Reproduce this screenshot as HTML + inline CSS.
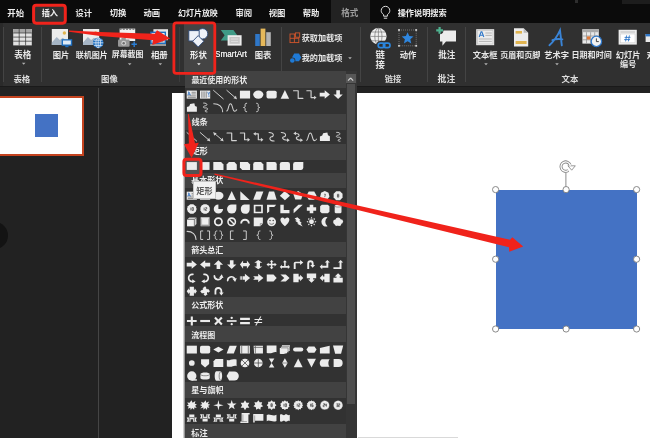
<!DOCTYPE html>
<html lang="zh-CN">
<head>
<meta charset="utf-8">
<title>PowerPoint - 插入形状</title>
<style>
html,body{margin:0;padding:0;background:#222;}
body{width:650px;height:438px;overflow:hidden;font-family:"Liberation Sans",sans-serif;}
#app{position:relative;width:650px;height:438px;overflow:hidden;background:#212121;}
#app div{position:absolute;box-sizing:border-box;}
.tabbar{left:0;top:0;width:650px;height:23px;background:#0b0b0b;}
.tab-ins{left:34px;top:5px;width:31px;height:18px;background:#303030;}
.tab-fmt{left:330.5px;top:0;width:39.5px;height:23px;background:#222;}
.ribbon{left:0;top:23px;width:650px;height:63px;background:#303030;}
.ribbon .edge{left:0;top:0;width:3px;height:63px;background:#2a2a2a;}
.sep{top:27px;width:1px;height:55px;background:#444;}
.shapebtn{left:183.5px;top:24px;width:30.5px;height:49px;background:#444;}
.smart{left:215.4px;top:49.4px;font-size:8.6px;line-height:10px;color:#efefef;filter:blur(.3px);letter-spacing:0;white-space:nowrap;transform-origin:0 50%;transform:scaleX(.945);text-shadow:0 0 .5px #efefef;}
.work{left:0;top:86px;width:650px;height:352px;background:#222;}
.ribline{left:0;top:86px;width:650px;height:1px;background:#1a1a1a;}
.split{left:97.5px;top:88px;width:1px;height:350px;background:#454545;}
.thumb{left:-2px;top:96.4px;width:85.6px;height:59.8px;background:#fff;border:2.2px solid #c4431f;}
.thumb .sq{left:34.8px;top:15.4px;width:23.4px;height:23px;background:#4472c4;}
.dot{left:-19px;top:222px;width:26.5px;height:26.5px;border-radius:50%;background:#131313;}
.slide{left:172px;top:92.8px;width:478px;height:345.2px;background:#fff;}
.slideline{left:358px;top:436.6px;width:100px;height:1.4px;background:#d9d9d9;}
.blue{left:495.6px;top:189.6px;width:141px;height:139.4px;background:#4472c4;}
.dd{left:184.7px;top:70.8px;width:172.8px;height:367.2px;background:#323232;overflow:hidden;}
.ddshadow{left:183.2px;top:93px;width:1.6px;height:345px;background:linear-gradient(90deg,#ededed,#777);}
.dd .hd{left:0;width:161.2px;background:#424242;}
.dd .sb{left:161.2px;top:0;width:11.6px;height:367.2px;background:#353535;}
.dd .sbthumb{left:162px;top:13.4px;width:8.6px;height:320px;background:#4e4e4e;}
.dd .sbbtn{left:161.6px;top:3.4px;width:9.6px;height:9px;background:#575757;}
.tip{left:193px;top:181.4px;width:22.6px;height:17.8px;background:#f2f2f2;border:.6px solid #c4c4c4;}
.rectsel{left:185.2px;top:160.4px;width:14.6px;height:14px;background:#525252;}
#ov,#ov2{position:absolute;left:0;top:0;filter:blur(.4px);}
#ov text,#ov2 text{font-family:"Liberation Sans","Noto Sans CJK SC",sans-serif;font-weight:bold;}
.t{position:absolute;color:transparent;line-height:1;height:1em;white-space:nowrap;overflow:hidden;letter-spacing:0;}
</style>
</head>
<body>
<div id="app">
 <div class="tabbar"><div class="tab-ins"></div><div class="tab-fmt"></div><div style="left:575px;top:0;width:3px;height:3px;background:#2e2e2e"></div><div style="left:622px;top:0;width:28px;height:4px;background:#1d1d1d"></div></div>
 <div class="ribbon"><div class="edge"></div></div>
 <div class="sep" style="left:3px"></div><div class="sep" style="left:41.3px"></div><div class="sep" style="left:281.4px"></div><div class="sep" style="left:178.6px;background:#3c3c3c"></div>
 <div class="sep" style="left:360.4px"></div><div class="sep" style="left:427.4px"></div><div class="sep" style="left:465.4px"></div>
 <div class="shapebtn"></div>
 <div class="smart">SmartArt</div>
 <div class="work"></div><div class="ribline"></div>
 <div class="split"></div>
 <div class="thumb"><div class="sq"></div></div>
 <div class="dot"></div>
 <div class="slide"></div><div class="slideline"></div>
 <div class="blue"></div>
 <div class="ddshadow"></div>
 <div class="dd"><div class="hd" style="top:0.0px;height:17.3px"></div><div class="hd" style="top:43.6px;height:15.5px"></div><div class="hd" style="top:72.8px;height:16.4px"></div><div class="hd" style="top:101.8px;height:15.3px"></div><div class="hd" style="top:170.9px;height:15.2px"></div><div class="hd" style="top:226.0px;height:16.8px"></div><div class="hd" style="top:255.7px;height:15.3px"></div><div class="hd" style="top:311.6px;height:15.4px"></div><div class="hd" style="top:353.6px;height:13.6px"></div><div class="sb"></div><div class="sbthumb"></div><div class="sbbtn"></div></div>
 <div class="rectsel"></div>
 <svg id="ov" width="650" height="438" viewBox="0 0 650 438">
  <!-- tab + ribbon text and icons -->
  <text x="7.3" y="15.74" font-size="8.39" fill="#eeeeee">开始</text><text x="41.7" y="15.65" font-size="8.13" fill="#eeeeee">插入</text><text x="75.5" y="15.69" font-size="8.23" fill="#eeeeee">设计</text><text x="109.7" y="15.72" font-size="8.33" fill="#eeeeee">切换</text><text x="143.5" y="15.72" font-size="8.33" fill="#eeeeee">动画</text><text x="178.0" y="15.59" font-size="7.97" fill="#eeeeee">幻灯片放映</text><text x="235.4" y="15.72" font-size="8.33" fill="#eeeeee">审阅</text><text x="268.7" y="15.72" font-size="8.33" fill="#eeeeee">视图</text><text x="302.7" y="15.72" font-size="8.33" fill="#eeeeee">帮助</text><text x="341.3" y="15.80" font-size="8.54" fill="#9e9e9e">格式</text><text x="397.7" y="15.67" font-size="8.19" fill="#eeeeee">操作说明搜索</text><g fill="none" stroke="#e0e0e0" stroke-width="1"><path d="M383.6 16.2v-1.6c-1.5-1-2.4-2.4-2.4-4a4.3 4.3 0 0 1 8.6 0c0 1.6-.9 3-2.4 4v1.6z"/><path d="M383.8 18.2h3.4"/></g><text x="14.2" y="57.72" font-size="8.59" fill="#e8e8e8">表格</text><text x="52.7" y="57.62" font-size="8.33" fill="#e8e8e8">图片</text><text x="75.7" y="57.51" font-size="8.04" fill="#e8e8e8">联机图片</text><text x="111.7" y="57.48" font-size="7.96" fill="#e8e8e8">屏幕截图</text><text x="150.9" y="57.64" font-size="8.39" fill="#e8e8e8">相册</text><text x="190.1" y="57.64" font-size="8.39" fill="#f2f2f2">形状</text><text x="254.7" y="57.62" font-size="8.33" fill="#e8e8e8">图表</text><text x="301.7" y="40.85" font-size="8.13" fill="#e8e8e8">获取加载项</text><text x="301.7" y="61.05" font-size="8.13" fill="#e8e8e8">我的加载项</text><text x="375.6" y="58.01" font-size="9.35" fill="#e8e8e8">链</text><text x="375.6" y="67.91" font-size="9.35" fill="#e8e8e8">接</text><text x="399.7" y="57.62" font-size="8.33" fill="#e8e8e8">动作</text><text x="438.2" y="57.72" font-size="8.59" fill="#e8e8e8">批注</text><text x="472.7" y="57.58" font-size="8.22" fill="#e8e8e8">文本框</text><text x="500.3" y="57.50" font-size="8.01" fill="#e8e8e8">页眉和页脚</text><text x="544.2" y="57.58" font-size="8.22" fill="#e8e8e8">艺术字</text><text x="571.5" y="57.52" font-size="8.05" fill="#e8e8e8">日期和时间</text><text x="615.7" y="57.58" font-size="8.22" fill="#e8e8e8">幻灯片</text><text x="620.1" y="67.45" font-size="8.13" fill="#e8e8e8">编号</text><text x="646.7" y="57.62" font-size="8.33" fill="#e8e8e8">对象</text><text x="13.4" y="81.98" font-size="8.49" fill="#dedede">表格</text><text x="101.1" y="81.94" font-size="8.39" fill="#dedede">图像</text><text x="384.7" y="81.92" font-size="8.33" fill="#dedede">链接</text><text x="437.6" y="82.12" font-size="8.85" fill="#dedede">批注</text><text x="561.5" y="81.96" font-size="8.44" fill="#dedede">文本</text><path d="M21.9 62.8h3.6l-1.8 2.0z" fill="#b0b0b0"/><path d="M127.9 63.3h3.6l-1.8 2.0z" fill="#b0b0b0"/><path d="M158.5 63.3h3.6l-1.8 2.0z" fill="#b0b0b0"/><path d="M484.2 63.2h3.6l-1.8 2.0z" fill="#b0b0b0"/><path d="M555.2 63.2h3.6l-1.8 2.0z" fill="#b0b0b0"/><path d="M348.2 57.2h3.6l-1.8 2.0z" fill="#b0b0b0"/><path d="M197.1 63.3h3.6l-1.8 2.0z" fill="#f0f0f0"/><g><rect x="13.2" y="29" width="18.6" height="16.4" fill="#e2e2e2"/><rect x="13.2" y="29" width="18.6" height="4" fill="#a5a5a5"/><path d="M19.2 29v16.4M25.6 29v16.4M13.2 33h18.6M13.2 37.1h18.6M13.2 41.2h18.6" stroke="#303030" stroke-width=".7" fill="none"/></g><g><rect x="51.8" y="29.0" width="16.2" height="16.0" fill="#ececec"/><path d="M51.8 42.5l4.9 -5.6l3.2 3.2l2.9 -2.4l5.2 4.8v2.5h-16.2z" fill="#a6b5c5"/><circle cx="64.4" cy="33.0" r="1.7" fill="#e0b450"/><rect x="61.6" y="39.2" width="10.6" height="6.6" fill="#1e6fc0"/><rect x="63" y="40.5" width="7.8" height="4" fill="#dfeaf6"/><rect x="65.3" y="45.8" width="3.2" height="1.4" fill="#1e6fc0"/></g><g><rect x="83.0" y="29.0" width="16.2" height="16.0" fill="#ececec"/><path d="M83.0 42.5l4.9 -5.6l3.2 3.2l2.9 -2.4l5.2 4.8v2.5h-16.2z" fill="#a6b5c5"/><circle cx="95.6" cy="33.0" r="1.7" fill="#e0b450"/><circle cx="98.2" cy="42.8" r="5.3" fill="#1e6fc0"/><g fill="none" stroke="#e8f0fa" stroke-width=".75"><ellipse cx="98.2" cy="42.8" rx="2.3" ry="5"/><path d="M93.1 42.8h10.2M98.2 37.7v10.2M93.9 40.2h8.6M93.9 45.4h8.6"/></g></g><g><rect x="119.600" y="28.600" width="15.600" height="12.400" fill="#f0f0f0"/><path d="M119.600 29.200h15.600" stroke="#666" stroke-width="1.200" stroke-dasharray="2 1.200"/><rect x="118" y="39.400" width="11.600" height="7.400" rx="1" fill="#979797"/><rect x="121.400" y="38" width="4.400" height="2" fill="#979797"/><circle cx="123.700" cy="43.200" r="2.400" fill="#cfcfcf"/><circle cx="123.700" cy="43.200" r="1.200" fill="#6e6e6e"/><path d="M134.200 41.600v5.400M131.500 44.300h5.400" stroke="#2b7fd6" stroke-width="1.400"/></g><g><rect x="153.4" y="29.2" width="14.6" height="11" fill="#e6e6e6"/><rect x="150.2" y="31.6" width="15.8" height="12.4" fill="#1e6fc0"/><rect x="151.6" y="33" width="13" height="9.6" fill="#e9eef4"/><path d="M151.6 42.6l3.6-5 2.8 2.8 2.2-2 4.4 4.2z" fill="#8fa3b8"/><circle cx="161.6" cy="35.4" r="1.2" fill="#e0b450"/><path d="M150.2 44h15.8v2h-15.8z" fill="#9a9a9a"/></g><g fill="#eef2f8" stroke="#2c4a78" stroke-width=".9" stroke-linejoin="round"><circle cx="202.600" cy="33.800" r="5.200"/><rect x="188.800" y="30.600" width="10.400" height="10.400"/><path d="M198.200 35.600l5.600 5.700-5.600 5.700-5.600-5.700z"/></g><g><path d="M220.800 30h12.600l3.800 5.300-3.800 5.300h-12.600l3.800-5.300z" fill="#3f9a86"/><rect x="227.600" y="35.200" width="14" height="10.400" fill="#ececec"/><rect x="229.400" y="37" width="10.400" height="6.800" fill="#c6c6c6"/><path d="M231 39h7.200M231 41.400h7.200" stroke="#e4e4e4" stroke-width=".8"/></g><g><rect x="255.2" y="34" width="4.6" height="12" fill="#2f77c8"/><rect x="260.6" y="28.6" width="4.8" height="17.4" fill="#e6b85a"/><rect x="266.2" y="32.2" width="4.6" height="13.8" fill="#b4b4b4"/></g><g fill="none" stroke="#d2562c" stroke-width=".9"><rect x="290" y="34" width="8.8" height="8.6"/><path d="M294.4 34v8.600M290 38.300h8.800"/><rect x="295.400" y="32.900" width="4.300" height="4.300" fill="#303030"/></g><g fill="#1f7ad6"><path d="M294.200 53.600h4.800l2.200 3.800-2.200 3.800h-4.800l-2.200-3.800z"/><circle cx="292.300" cy="60.500" r="3.100" fill="#303030"/><circle cx="292.300" cy="60.500" r="2.300"/></g><g><circle cx="378.4" cy="36.2" r="8.2" fill="#f0f0f0"/><g fill="none" stroke="#777" stroke-width=".7"><ellipse cx="378.4" cy="36.4" rx="3.6" ry="8.2"/><path d="M370 36.4h16.8M378.4 28v16.8M371.4 32h14M371.4 40.8h14"/></g><g fill="none" stroke="#303030" stroke-width="4.2"><rect x="378.2" y="43.2" width="6.6" height="4.4" rx="2.2"/><rect x="383.4" y="43.2" width="6.6" height="4.4" rx="2.2"/></g><g fill="none" stroke="#2b86de" stroke-width="1.7"><rect x="378.2" y="43.2" width="6.6" height="4.4" rx="2.2"/><rect x="383.4" y="43.2" width="6.6" height="4.4" rx="2.2"/></g></g><g><rect x="399" y="30" width="17.2" height="15.8" fill="none" stroke="#8f8f8f" stroke-width=".7" stroke-dasharray="1 1"/><rect x="398.1" y="29.1" width="1.8" height="1.8" fill="#d0d0d0"/><rect x="398.1" y="44.9" width="1.8" height="1.8" fill="#d0d0d0"/><rect x="415.3" y="29.1" width="1.8" height="1.8" fill="#d0d0d0"/><rect x="415.3" y="44.9" width="1.8" height="1.8" fill="#d0d0d0"/><path d="M407.6 32.2l1.7 3.9 4.2.4-3.2 2.8 1 4.1-3.7-2.2-3.7 2.2 1-4.1-3.2-2.8 4.2-.4z" fill="#2f86de"/></g><g><path d="M440 30.6h16v11h-10l-3.6 4.2v-4.2H440z" fill="#ececec"/><circle cx="439.6" cy="30.4" r="3.8" fill="#303030"/><path d="M439.6 27v6.8M436.2 30.4h6.8" stroke="#4fb290" stroke-width="2.2"/></g><g><rect x="476.2" y="29.2" width="18" height="16" fill="#ececec"/><rect x="477.4" y="30.4" width="15.6" height="13.6" fill="none" stroke="#bcbcbc" stroke-width=".6"/><path d="M485.4 33h6.4M485.4 35.4h6.4M478.8 39h13M478.8 41.4h13" stroke="#b5b5b5" stroke-width="1"/><path d="M479.2 37l1.9-5.2h.8l1.9 5.2M480 35.3h3" fill="none" stroke="#2f77c8" stroke-width="1.1"/></g><g><path d="M514 28.2h9.6l4.6 4.6v13.8H514z" fill="#ececec"/><path d="M523.6 28.2v4.6h4.6z" fill="#b9b9b9"/><rect x="515.6" y="31" width="6.4" height="2.6" fill="#e0b450"/><rect x="515.6" y="41" width="11" height="3" fill="#e0b450"/></g><path d="M549.400 45.200C553.600 41.600 557.600 35.600 560 30.400L561.800 45.400M552.400 40.200C555.400 39 559 38.800 562.400 39.400" fill="none" stroke="#3a84d6" stroke-width="1.900" stroke-linecap="round"/><g><rect x="582.4" y="29.2" width="16.4" height="14.4" fill="#e8e8e8"/><rect x="582.4" y="29.2" width="16.4" height="3" fill="#a8a8a8"/><path d="M586.5 32.2v11.4M590.6 32.2v11.4M594.7 32.2v11.4M582.4 36h16.4M582.4 39.8h16.4" stroke="#8d8d8d" stroke-width=".7"/><rect x="586.9" y="36.4" width="3.4" height="3.1" fill="#e07a3a"/><circle cx="596.4" cy="41.4" r="5.2" fill="#f1f1f1" stroke="#2f77c8" stroke-width="1.3"/><path d="M596.4 38.4v3.2h2.4" fill="none" stroke="#333" stroke-width=".9"/></g><g><rect x="618.6" y="29.8" width="18.2" height="14.8" fill="#ececec"/><path d="M620.4 32h14.6" stroke="#bdbdbd" stroke-width="1"/><rect x="620.4" y="34" width="14.6" height="8.8" fill="#fff" stroke="#c8c8c8" stroke-width=".5"/><path d="M626.6 35.4l-1 6M629.4 35.4l-1 6M624.6 37.4h5.8M624.2 39.6h5.8" stroke="#2f77c8" stroke-width=".9" fill="none"/></g><g><rect x="645.6" y="34" width="8" height="8" fill="#e9e9e9"/><rect x="645.6" y="34" width="8" height="2.4" fill="#2f77c8"/></g>
  <!-- dropdown -->
  <path d="M350.6 79.6l-2.6 2.6M350.6 79.6l2.6 2.6" transform="translate(0 -1.6)" stroke="#d0d0d0" stroke-width="1.1" fill="none"/>
  <text x="191.4" y="83.29" font-size="7.98" fill="#ececec">最近使用的形状</text><text x="191.4" y="125.29" font-size="8.23" fill="#ececec">线条</text><text x="191.4" y="153.59" font-size="8.23" fill="#ececec">矩形</text><text x="191.2" y="183.31" font-size="8.04" fill="#ececec">基本形状</text><text x="191.2" y="253.41" font-size="8.04" fill="#ececec">箭头总汇</text><text x="191.2" y="308.31" font-size="8.04" fill="#ececec">公式形状</text><text x="191.2" y="338.01" font-size="8.01" fill="#ececec">流程图</text><text x="191.2" y="393.25" font-size="8.14" fill="#ececec">星与旗帜</text><text x="191.2" y="435.69" font-size="8.23" fill="#ececec">标注</text>
  <g transform="translate(191.8 94.6) scale(1.06)"><path d="M-4.8 -3.8h9.6v7.6h-9.6z" fill="#ececec"/><path d="M-3.6 -2.4l1-0 1.3 3.2M-3.9 .8l1.3-3.2M-3.4 -.2h2" stroke="#2f6fc0" stroke-width=".7" fill="none"/><path d="M-.2 -2.2h4M-.2 -.6h4M-3.8 1.2h7.6M-3.8 2.6h7.6" stroke="#555" stroke-width=".6"/></g><g transform="translate(205.1 94.6) scale(1.06)"><path d="M-4.8 -3.8h9.6v7.6h-9.6z" fill="#ececec"/><path d="M-3 -3v6M-1 -3v6M1 -3v6" stroke="#555" stroke-width=".7"/><path d="M2.4 -2.6l1 2.6 1-2.6M2.6 1.4h1.8" stroke="#2f6fc0" stroke-width=".7" fill="none"/></g><g transform="translate(218.4 94.6) scale(1.06)"><path d="M-4.6 -4L4.6 4" fill="none" stroke="#d2d2d2" stroke-width="0.9" stroke-linecap="round" stroke-linejoin="round"/></g><g transform="translate(231.7 94.6) scale(1.06)"><path d="M-4.6 -4L4.4 3.8" fill="none" stroke="#d2d2d2" stroke-width="0.9" stroke-linecap="round" stroke-linejoin="round"/><path d="M4.8 4.2L1.6 3.4L4 1z" fill="#d2d2d2"/></g><g transform="translate(245.0 94.6) scale(1.06)"><path d="M-4.8 -3.7h9.6v7.4h-9.6z" fill="#ececec"/></g><g transform="translate(258.3 94.6) scale(1.06)"><ellipse rx="4.8" ry="3.8" fill="#ececec"/></g><g transform="translate(271.6 94.6) scale(1.06)"><rect x="-4.8" y="-3.7" width="9.6" height="7.4" rx="1.6" fill="#ececec"/></g><g transform="translate(284.9 94.6) scale(1.06)"><path d="M0 -4.400L4 4H-4z" fill="#ececec"/></g><g transform="translate(298.2 94.6) scale(1.06)"><path d="M-4.4 -3.6H0V3.6H4.4" fill="none" stroke="#d2d2d2" stroke-width="1.1" stroke-linecap="round" stroke-linejoin="round"/></g><g transform="translate(311.5 94.6) scale(1.06)"><path d="M-4.4 -3.6H-.4V2.8H3.2" fill="none" stroke="#d2d2d2" stroke-width="1.1" stroke-linecap="round" stroke-linejoin="round"/><path d="M4.8 2.8L2.4 1V4.6z" fill="#d2d2d2"/></g><g transform="translate(324.8 94.6) scale(1.06)"><path d="M-4.8 -1.7h4.7V-4L4.8 0L-.1 4V1.7h-4.7z" fill="#ececec"/></g><g transform="translate(338.1 94.6) scale(1.06)"><g transform="rotate(90)"><path d="M-4.2 -1.7h4.1V-4.4L4.2 0L-.1 4.4V1.7h-4.1z" fill="#ececec"/></g></g><g transform="translate(191.8 107.5) scale(1.06)"><path d="M-4.6 4V-.4L-2.4 -1.2L-1.6 -3.4L2.4 -4L3 -1.4L4.8 -.6V4z" fill="#ececec"/></g><g transform="translate(205.1 107.5) scale(1.06)"><path d="M-1.400 -4.200C2.400 -4.400 2.600 -2 .200 -1.600C-2.400 -1.200 -2.200 .600 .400 .400C3 .200 3 2.200 .800 2.600C-.600 2.900 -.400 4.200 1.800 4.200" fill="none" stroke="#d2d2d2" stroke-width="0.9" stroke-linecap="round" stroke-linejoin="round"/></g><g transform="translate(218.4 107.5) scale(1.06)"><path d="M-4.4 -3.6C.6 -3.6 4 -.4 4 4" fill="none" stroke="#d2d2d2" stroke-width="1.0" stroke-linecap="round" stroke-linejoin="round"/></g><g transform="translate(231.7 107.5) scale(1.06)"><path d="M-4.6 3.2C-3 3.2 -3.2 -3.600 -1.200 -3.600C1.200 -3.600 .400 3.600 2.800 3.600C3.800 3.600 4.300 3 4.700 2.200" fill="none" stroke="#d2d2d2" stroke-width="1.0" stroke-linecap="round" stroke-linejoin="round"/></g><g transform="translate(245.0 107.5) scale(1.06)"><path d="M1.6 -4C.2 -4 .1 -3.4 .1 -2.4V-1.2C.1 -.4 -.4 0 -1.4 0C-.4 0 .1 .4 .1 1.2V2.4C.1 3.4 .2 4 1.6 4" fill="none" stroke="#d2d2d2" stroke-width="0.9" stroke-linecap="round" stroke-linejoin="round"/></g><g transform="translate(258.3 107.5) scale(1.06)"><path d="M-1.6 -4C-.2 -4 -.1 -3.4 -.1 -2.4V-1.2C-.1 -.4 .4 0 1.4 0C.4 0 -.1 .4 -.1 1.2V2.4C-.1 3.4 -.2 4 -1.6 4" fill="none" stroke="#d2d2d2" stroke-width="0.9" stroke-linecap="round" stroke-linejoin="round"/></g><g transform="translate(191.8 136.8) scale(1.06)"><path d="M-4.6 -4L4.6 4" fill="none" stroke="#d2d2d2" stroke-width="0.9" stroke-linecap="round" stroke-linejoin="round"/></g><g transform="translate(205.1 136.8) scale(1.06)"><path d="M-4.6 -4L4.4 3.8" fill="none" stroke="#d2d2d2" stroke-width="0.9" stroke-linecap="round" stroke-linejoin="round"/><path d="M4.8 4.2L1.6 3.4L4 1z" fill="#d2d2d2"/></g><g transform="translate(218.4 136.8) scale(1.06)"><path d="M-4.2 -3.6L4.2 3.6" fill="none" stroke="#d2d2d2" stroke-width="0.9" stroke-linecap="round" stroke-linejoin="round"/><path d="M4.8 4.2L1.6 3.4L4 1z" fill="#d2d2d2"/><path d="M-4.8 -4.2L-1.6 -3.4L-4 -1z" fill="#d2d2d2"/></g><g transform="translate(231.7 136.8) scale(1.06)"><path d="M-4.4 -3.6H0V3.6H4.4" fill="none" stroke="#d2d2d2" stroke-width="1.1" stroke-linecap="round" stroke-linejoin="round"/></g><g transform="translate(245.0 136.8) scale(1.06)"><path d="M-4.4 -3.6H-.4V2.8H3.2" fill="none" stroke="#d2d2d2" stroke-width="1.1" stroke-linecap="round" stroke-linejoin="round"/><path d="M4.8 2.8L2.4 1V4.6z" fill="#d2d2d2"/></g><g transform="translate(258.3 136.8) scale(1.06)"><path d="M-3 -2.8H0V2.8H3.2" fill="none" stroke="#d2d2d2" stroke-width="1.1" stroke-linecap="round" stroke-linejoin="round"/><path d="M4.8 2.8L2.4 1V4.6z" fill="#d2d2d2"/><path d="M-4.8 -2.8L-2.4 -4.6V-1z" fill="#d2d2d2"/></g><g transform="translate(271.6 136.8) scale(1.06)"><path d="M-2.4 -4C3 -4 2 0 0 0C-2 0 -3 4 2.4 4" fill="none" stroke="#d2d2d2" stroke-width="1.0" stroke-linecap="round" stroke-linejoin="round"/></g><g transform="translate(284.9 136.8) scale(1.06)"><path d="M-3.4 -4C2 -4 1 0 -.8 0C-3 0 -3 3.2 2.6 3.2" fill="none" stroke="#d2d2d2" stroke-width="1.0" stroke-linecap="round" stroke-linejoin="round"/><path d="M4.6 3.2L2 1.4V5z" fill="#d2d2d2"/></g><g transform="translate(298.2 136.8) scale(1.06)"><path d="M-2.4 -3.2C2 -3.2 1 0 -.4 0C-2.6 0 -2.6 3.2 2.6 3.2" fill="none" stroke="#d2d2d2" stroke-width="1.0" stroke-linecap="round" stroke-linejoin="round"/><path d="M4.6 3.2L2 1.4V5z" fill="#d2d2d2"/><path d="M-4.6 -3.2L-2 -5V-1.4z" fill="#d2d2d2"/></g><g transform="translate(311.5 136.8) scale(1.06)"><path d="M-4.6 3.2C-3 3.2 -3.2 -3.600 -1.200 -3.600C1.200 -3.600 .400 3.600 2.800 3.600C3.800 3.600 4.300 3 4.700 2.200" fill="none" stroke="#d2d2d2" stroke-width="1.0" stroke-linecap="round" stroke-linejoin="round"/></g><g transform="translate(324.8 136.8) scale(1.06)"><path d="M-4.6 4V-.4L-2.4 -1.2L-1.6 -3.4L2.4 -4L3 -1.4L4.8 -.6V4z" fill="#ececec"/></g><g transform="translate(338.1 136.8) scale(1.06)"><path d="M-1.400 -4.200C2.400 -4.400 2.600 -2 .200 -1.600C-2.400 -1.200 -2.200 .600 .400 .400C3 .200 3 2.200 .800 2.600C-.600 2.900 -.400 4.200 1.800 4.200" fill="none" stroke="#d2d2d2" stroke-width="0.9" stroke-linecap="round" stroke-linejoin="round"/></g><g transform="translate(191.8 166.0) scale(1.06)"><path d="M-4.8 -3.7h9.6v7.4h-9.6z" fill="#ececec"/></g><g transform="translate(205.1 166.0) scale(1.06)"><path d="M-4.2 -3.7h8.4v7.4h-8.4z" fill="#ececec"/></g><g transform="translate(218.4 166.0) scale(1.06)"><path d="M-4.8 -3.7H2.6L4.8 -1.5V3.7H-4.8z" fill="#ececec"/></g><g transform="translate(231.7 166.0) scale(1.06)"><path d="M-2.6 -3.7H2.6L4.8 -1.5V3.7H-4.8V-1.5z" fill="#ececec"/></g><g transform="translate(245.0 166.0) scale(1.06)"><path d="M-4.8 -3.7H2.6L4.8 -1.5V3.7H-2.6L-4.8 1.5z" fill="#ececec"/></g><g transform="translate(258.3 166.0) scale(1.06)"><path d="M-2.8 -3.7H2.6L4.8 -1.5V3.7H-4.8V-1.7A2 2 0 0 1 -2.8 -3.7z" fill="#ececec"/></g><g transform="translate(271.6 166.0) scale(1.06)"><path d="M-4.8 -3.7H2.8A2 2 0 0 1 4.8 -1.7V3.7H-4.8z" fill="#ececec"/></g><g transform="translate(284.9 166.0) scale(1.06)"><path d="M-2.8 -3.7H2.8A2 2 0 0 1 4.8 -1.7V3.7H-4.8V-1.7A2 2 0 0 1 -2.8 -3.7z" fill="#ececec"/></g><g transform="translate(298.2 166.0) scale(1.06)"><path d="M-2.8 -3.7H4.8V1.7A2 2 0 0 1 2.8 3.7H-4.8V-1.7A2 2 0 0 1 -2.8 -3.7z" fill="#ececec"/></g><g transform="translate(191.8 195.7) scale(1.06)"><path d="M-4.8 -3.8h9.6v7.6h-9.6z" fill="#ececec"/><path d="M-3.6 -2.4l1-0 1.3 3.2M-3.9 .8l1.3-3.2M-3.4 -.2h2" stroke="#2f6fc0" stroke-width=".7" fill="none"/><path d="M-.2 -2.2h4M-.2 -.6h4M-3.8 1.2h7.6M-3.8 2.6h7.6" stroke="#555" stroke-width=".6"/></g><g transform="translate(205.1 195.7) scale(1.06)"><path d="M-4.8 -3.8h9.6v7.6h-9.6z" fill="#ececec"/><path d="M-3 -3v6M-1 -3v6M1 -3v6" stroke="#555" stroke-width=".7"/><path d="M2.4 -2.6l1 2.6 1-2.6M2.6 1.4h1.8" stroke="#2f6fc0" stroke-width=".7" fill="none"/></g><g transform="translate(218.4 195.7) scale(1.06)"><ellipse rx="4.8" ry="3.8" fill="#ececec"/></g><g transform="translate(231.7 195.7) scale(1.06)"><path d="M0 -4.400L4 4H-4z" fill="#ececec"/></g><g transform="translate(245.0 195.7) scale(1.06)"><path d="M-4.4 -4.2V4H4.4z" fill="#ececec"/></g><g transform="translate(258.3 195.7) scale(1.06)"><path d="M-1.8 -3.9H4.8L1.8 3.9H-4.8z" fill="#ececec"/></g><g transform="translate(271.6 195.7) scale(1.06)"><path d="M-2.4 -3.9H2.4L4.8 3.9H-4.8z" fill="#ececec"/></g><g transform="translate(284.9 195.7) scale(1.06)"><path d="M0 -4.4L4.8 0L0 4.4L-4.8 0z" fill="#ececec"/></g><g transform="translate(298.2 195.7) scale(1.06)"><path d="M0.0 -4.4L4.5 -1.4L2.8 3.5L-2.8 3.5L-4.5 -1.4z" fill="#ececec"/></g><g transform="translate(311.5 195.7) scale(1.06)"><path d="M-2.6 -3.9H2.6L4.8 0L2.6 3.9H-2.6L-4.8 0z" fill="#ececec"/></g><g transform="translate(324.8 195.7) scale(1.06)"><path d="M0.0 -4.5L3.5 -2.8L4.4 1.0L2.0 4.1L-2.0 4.1L-4.4 1.0L-3.5 -2.8z" fill="#ececec"/><g fill="none" stroke="#3a3a3a" stroke-width=".5" stroke-linejoin="round"><path transform="translate(-0.62 -1.35) scale(1.25 1.35)" d="M0 0H1L.4 2"/></g></g><g transform="translate(338.1 195.7) scale(1.06)"><path d="M4.2 1.8L1.8 4.2L-1.8 4.2L-4.2 1.8L-4.2 -1.8L-1.8 -4.2L1.8 -4.2L4.2 -1.8z" fill="#ececec"/><g fill="none" stroke="#3a3a3a" stroke-width=".5" stroke-linejoin="round"><path transform="translate(-0.62 -1.35) scale(1.25 1.35)" d="M0 0H1V2H0zM0 1H1"/></g></g><g transform="translate(191.8 209.0) scale(1.06)"><path d="M4.6 0.0L3.7 2.7L1.4 4.4L-1.4 4.4L-3.7 2.7L-4.6 0.0L-3.7 -2.7L-1.4 -4.4L1.4 -4.4L3.7 -2.7z" fill="#ececec"/><g fill="none" stroke="#3a3a3a" stroke-width=".5" stroke-linejoin="round"><path transform="translate(-1.52 -1.35) scale(1.25 1.35)" d="M.5 0V2"/><path transform="translate(0.28 -1.35) scale(1.25 1.35)" d="M0 0H1V2H0z"/></g></g><g transform="translate(205.1 209.0) scale(1.06)"><path d="M4.4 1.2L3.3 3.3L1.2 4.4L-1.2 4.4L-3.3 3.3L-4.4 1.2L-4.4 -1.2L-3.3 -3.3L-1.2 -4.4L1.2 -4.4L3.3 -3.3L4.4 -1.2z" fill="#ececec"/><g fill="none" stroke="#3a3a3a" stroke-width=".5" stroke-linejoin="round"><path transform="translate(-1.52 -1.35) scale(1.25 1.35)" d="M.5 0V2"/><path transform="translate(0.28 -1.35) scale(1.25 1.35)" d="M0 0H1V1H0V2H1"/></g></g><g transform="translate(218.4 209.0) scale(1.06)"><path d="M0 0V-4.2A4.4 4.2 0 1 0 4.4 0z" fill="#ececec"/></g><g transform="translate(231.7 209.0) scale(1.06)"><path d="M0 -4.2H4.4V0A4.4 4.2 0 1 1 0 -4.2z" fill="#ececec"/></g><g transform="translate(245.0 209.0) scale(1.06)"><path d="M4.4 -4.2V.6A4.2 4.4 0 1 1 -.6 -4.2z" fill="#ececec"/></g><g transform="translate(258.3 209.0) scale(1.06)"><path fill-rule="evenodd" d="M-4.3 -4.1h8.6v8.2h-8.6zM-2.7 -2.5v5h5.4v-5z" fill="#ececec"/></g><g transform="translate(271.6 209.0) scale(1.06)"><path d="M-4.3 -4.1h8.6L2.5 -2H-2.2V2.4L-4.3 4.1z" fill="#ececec"/></g><g transform="translate(284.9 209.0) scale(1.06)"><path d="M-4.3 -4.1h3.2V1h5.4V4.1h-8.6z" fill="#ececec"/></g><g transform="translate(298.2 209.0) scale(1.06)"><path d="M-4.3 4.1V.2L.2 -4.1H4.3z" fill="#ececec"/></g><g transform="translate(311.5 209.0) scale(1.06)"><path d="M-1.7 -4.1h3.4v2.4h2.7v3.4h-2.7v2.4h-3.4v-2.4h-2.7v-3.4h2.7z" fill="#ececec"/></g><g transform="translate(324.8 209.0) scale(1.06)"><path d="M-2.8 -4.1h5.6l1.6 1.6v5l-1.6 1.6h-5.6l-1.6-1.6v-5z" fill="#ececec"/></g><g transform="translate(338.1 209.0) scale(1.06)"><path d="M-3.2 -3c0-1.5 6.4-1.5 6.4 0v6c0 1.5-6.4 1.5-6.4 0z" fill="#ececec"/><path d="M-3.2 -2.8c0 1.3 6.4 1.3 6.4 0" fill="none" stroke="#555" stroke-width=".5"/></g><g transform="translate(191.8 221.8) scale(1.06)"><path d="M-4.4 -2.2l2-1.9h6.8v6.2l-2 2h-6.8z" fill="#cfcfcf"/><rect x="-4.4" y="-2.2" width="6.8" height="6.3" fill="#f0f0f0"/><path d="M-4.4 -2.2h6.8v6.3M2.4 -2.2l2-1.9" fill="none" stroke="#3a3a3a" stroke-width=".55"/></g><g transform="translate(205.1 221.8) scale(1.06)"><rect x="-4.3" y="-4.1" width="8.6" height="8.2" fill="#bdbdbd"/><path d="M-4.3 -4.1h8.6l-1.5 1.5h-5.6z" fill="#e9e9e9"/><path d="M-4.3 4.1h8.6l-1.5-1.5h-5.6z" fill="#9a9a9a"/><rect x="-2.8" y="-2.6" width="5.6" height="5.2" fill="#f0f0f0"/></g><g transform="translate(218.4 221.8) scale(1.06)"><circle r="3.4" fill="none" stroke="#ececec" stroke-width="1.7"/></g><g transform="translate(231.7 221.8) scale(1.06)"><circle r="3.5" fill="none" stroke="#ececec" stroke-width="1.5"/><path d="M-2.4 -2.4L2.4 2.4" stroke="#ececec" stroke-width="1.4"/></g><g transform="translate(245.0 221.8) scale(1.06)"><path d="M-3.6 1.6A3.6 3.6 0 0 1 3.6 1.6" fill="none" stroke="#ececec" stroke-width="1.8"/></g><g transform="translate(258.3 221.8) scale(1.06)"><path d="M-4.3 -4.1h8.6V1.7L1.9 4.1H-4.3z" fill="#ececec"/><path d="M4.3 1.7H1.9V4.1" fill="none" stroke="#555" stroke-width=".5"/></g><g transform="translate(271.6 221.8) scale(1.06)"><circle r="4.2" fill="#ececec"/><circle cx="-1.5" cy="-1.2" r=".65" fill="#333"/><circle cx="1.5" cy="-1.2" r=".65" fill="#333"/><path d="M-2.2 1.1C-1 2.7 1 2.7 2.2 1.1" fill="none" stroke="#333" stroke-width=".6"/></g><g transform="translate(284.9 221.8) scale(1.06)"><path d="M0 4.2C-5.4 .2 -5 -4 -2.3 -4C-.9 -4 0 -2.9 0 -2.2C0 -2.9 .9 -4 2.3 -4C5 -4 5.4 .2 0 4.2z" fill="#ececec"/></g><g transform="translate(298.2 221.8) scale(1.06)"><path d="M-.8 -4.2L2.2 -1.6L1 -1.1L3.4 1.2L2.3 1.6L4.2 4.4L-1 1.9L.3 1.3L-2.9 -.9L-1.4 -1.5L-3.4 -3.2z" fill="#ececec"/></g><g transform="translate(311.5 221.8) scale(1.06)"><g fill="#ececec"><circle r="2.3"/><path transform="rotate(0)" d="M-.9 -3.1L0 -4.7L.9 -3.1z"/><path transform="rotate(45)" d="M-.9 -3.1L0 -4.7L.9 -3.1z"/><path transform="rotate(90)" d="M-.9 -3.1L0 -4.7L.9 -3.1z"/><path transform="rotate(135)" d="M-.9 -3.1L0 -4.7L.9 -3.1z"/><path transform="rotate(180)" d="M-.9 -3.1L0 -4.7L.9 -3.1z"/><path transform="rotate(225)" d="M-.9 -3.1L0 -4.7L.9 -3.1z"/><path transform="rotate(270)" d="M-.9 -3.1L0 -4.7L.9 -3.1z"/><path transform="rotate(315)" d="M-.9 -3.1L0 -4.7L.9 -3.1z"/></g></g><g transform="translate(324.8 221.8) scale(1.06)"><path d="M2.6 -4.3A4.5 4.5 0 1 0 2.6 4.3A5.4 5.4 0 0 1 2.6 -4.3z" fill="#ececec"/></g><g transform="translate(338.1 221.8) scale(1.06)"><g fill="#ececec"><circle cx="-2.4" cy=".2" r="2.3"/><circle cx="0" cy="-1.6" r="2.4"/><circle cx="2.4" cy="-.2" r="2.3"/><circle cx="1" cy="1.8" r="2.1"/><circle cx="-1.4" cy="1.9" r="2"/></g></g><g transform="translate(191.8 235.2) scale(1.06)"><path d="M-4.4 -3.6C.6 -3.6 4 -.4 4 4" fill="none" stroke="#d2d2d2" stroke-width="1.0" stroke-linecap="round" stroke-linejoin="round"/></g><g transform="translate(205.1 235.2) scale(1.06)"><path d="M-2.2 -4H-4.2V4H-2.2M2.2 -4H4.2V4H2.2" fill="none" stroke="#d2d2d2" stroke-width="0.9" stroke-linecap="round" stroke-linejoin="round"/></g><g transform="translate(218.4 235.2) scale(1.06)"><path d="M-1.4 -4C-2.8 -4 -2.9 -3.4 -2.9 -2.4V-1.2C-2.9 -.4 -3.4 0 -4.4 0C-3.4 0 -2.9 .4 -2.9 1.2V2.4C-2.9 3.4 -2.8 4 -1.4 4M1.4 -4C2.8 -4 2.9 -3.4 2.9 -2.4V-1.2C2.9 -.4 3.4 0 4.4 0C3.4 0 2.9 .4 2.9 1.2V2.4C2.9 3.4 2.8 4 1.4 4" fill="none" stroke="#d2d2d2" stroke-width="0.9" stroke-linecap="round" stroke-linejoin="round"/></g><g transform="translate(231.7 235.2) scale(1.06)"><path d="M1.4 -4H-1.2V4H1.4" fill="none" stroke="#d2d2d2" stroke-width="0.9" stroke-linecap="round" stroke-linejoin="round"/></g><g transform="translate(245.0 235.2) scale(1.06)"><path d="M-1.4 -4H1.2V4H-1.4" fill="none" stroke="#d2d2d2" stroke-width="0.9" stroke-linecap="round" stroke-linejoin="round"/></g><g transform="translate(258.3 235.2) scale(1.06)"><path d="M1.6 -4C.2 -4 .1 -3.4 .1 -2.4V-1.2C.1 -.4 -.4 0 -1.4 0C-.4 0 .1 .4 .1 1.2V2.4C.1 3.4 .2 4 1.6 4" fill="none" stroke="#d2d2d2" stroke-width="0.9" stroke-linecap="round" stroke-linejoin="round"/></g><g transform="translate(271.6 235.2) scale(1.06)"><path d="M-1.6 -4C-.2 -4 -.1 -3.4 -.1 -2.4V-1.2C-.1 -.4 .4 0 1.4 0C.4 0 -.1 .4 -.1 1.2V2.4C-.1 3.4 -.2 4 -1.6 4" fill="none" stroke="#d2d2d2" stroke-width="0.9" stroke-linecap="round" stroke-linejoin="round"/></g><g transform="translate(191.8 264.6) scale(1.06)"><path d="M-4.8 -1.7h4.7V-4L4.8 0L-.1 4V1.7h-4.7z" fill="#ececec"/></g><g transform="translate(205.1 264.6) scale(1.06)"><g transform="scale(-1 1)"><path d="M-4.8 -1.7h4.7V-4L4.8 0L-.1 4V1.7h-4.7z" fill="#ececec"/></g></g><g transform="translate(218.4 264.6) scale(1.06)"><g transform="rotate(-90)"><path d="M-4.2 -1.7h4.1V-4.4L4.2 0L-.1 4.4V1.7h-4.1z" fill="#ececec"/></g></g><g transform="translate(231.7 264.6) scale(1.06)"><g transform="rotate(90)"><path d="M-4.2 -1.7h4.1V-4.4L4.2 0L-.1 4.4V1.7h-4.1z" fill="#ececec"/></g></g><g transform="translate(245.0 264.6) scale(1.06)"><path d="M-4.8 0L-1.8 -3.8v2.2h3.6v-2.2L4.8 0L1.8 3.8v-2.2h-3.6v2.2z" fill="#ececec"/></g><g transform="translate(258.3 264.6) scale(1.06)"><g transform="rotate(90)"><path d="M-4.4 0L-1.8 -3.8v2.2h3.6v-2.2L4.4 0L1.8 3.8v-2.2h-3.6v2.2z" fill="#ececec"/></g></g><g transform="translate(271.6 264.6) scale(1.06)"><path d="M0 -4.4L1.8 -2.6H.7V-.7H2.8V-1.8L4.8 0L2.8 1.8V.7H.7V2.6H1.8L0 4.4L-1.8 2.6H-.7V.7H-2.8V1.8L-4.8 0L-2.8 -1.8V-.7H-.7V-2.6H-1.8z" fill="#ececec"/></g><g transform="translate(284.9 264.6) scale(1.06)"><path d="M0 -4.2L1.9 -2.2H.7V1.3H2.8V.2L4.8 2.2L2.8 4.2V3H-2.8V4.2L-4.8 2.2L-2.8 .2V1.3H-.7V-2.2H-1.9z" fill="#ececec"/></g><g transform="translate(298.2 264.6) scale(1.06)"><path d="M-4.2 4.2V-1.2A1.6 1.6 0 0 1 -2.6 -2.8H1.8V-4.4L4.8 -2L1.8 .4V-1.2H-2.4V4.2z" fill="#ececec"/></g><g transform="translate(311.5 264.6) scale(1.06)"><path d="M-4 4.2V-1A3 3 0 0 1 2 -1V.4H3.4L1.1 3L-1.2 .4H.2V-1A1.2 1.2 0 0 0 -2.2 -1V4.2z" fill="#ececec"/></g><g transform="translate(324.8 264.6) scale(1.06)"><path d="M-4.8 2L-2.4 -.4V1.1H1.5V-2H0L2.4 -4.4L4.8 -2H3.3V2.9H-2.4V4.4z" fill="#ececec"/></g><g transform="translate(338.1 264.6) scale(1.06)"><path d="M-4.4 2.4H1.4V-2H0L2.4 -4.4L4.8 -2H3.2V4.2H-4.4z" fill="#ececec"/></g><g transform="translate(191.8 278.0) scale(1.06)"><path d="M1 -3.4A3.2 3.4 0 1 0 1 3.2" fill="none" stroke="#ececec" stroke-width="1.6" stroke-linecap="round" stroke-linejoin="round"/><path d="M.4 1.2L3.6 3.4L.4 5z" fill="#ececec"/></g><g transform="translate(205.1 278.0) scale(1.06)"><path d="M-1 -3.4A3.2 3.4 0 1 1 -1 3.2" fill="none" stroke="#ececec" stroke-width="1.6" stroke-linecap="round" stroke-linejoin="round"/><path d="M-.4 1.2L-3.6 3.4L-.4 5z" fill="#ececec"/></g><g transform="translate(218.4 278.0) scale(1.06)"><path d="M-3.8 -2A3.6 3.6 0 0 0 2.6 .2" fill="none" stroke="#ececec" stroke-width="1.6" stroke-linecap="round" stroke-linejoin="round"/><path d="M.6 -.2L3.2 -3.6L4.8 0z" fill="#ececec"/></g><g transform="translate(231.7 278.0) scale(1.06)"><path d="M-3.8 2.4A3.6 3.6 0 0 1 2.6 .2" fill="none" stroke="#ececec" stroke-width="1.6" stroke-linecap="round" stroke-linejoin="round"/><path d="M.6 .4L3.2 3.8L4.8 .2z" fill="#ececec"/></g><g transform="translate(245.0 278.0) scale(1.06)"><path d="M-2.2 -1.7h2.1V-4L4.8 0L-.1 4V1.7h-2.1zM-4.8 -1.7h.7v3.4h-.7zM-3.6 -1.7h.9v3.4h-.9z" fill="#ececec"/></g><g transform="translate(258.3 278.0) scale(1.06)"><path d="M-4.8 -1.7h4.7V-4L4.8 0L-.1 4V1.7h-4.7L-3.2 0z" fill="#ececec"/></g><g transform="translate(271.6 278.0) scale(1.06)"><path d="M-4.6 -3.2H1.8L4.8 0L1.8 3.2H-4.6z" fill="#ececec"/></g><g transform="translate(284.9 278.0) scale(1.06)"><path d="M-4.2 -3.4H.8L4.4 0L.8 3.4H-4.2L-.6 0z" fill="#ececec"/></g><g transform="translate(298.2 278.0) scale(1.06)"><path d="M-4.6 -4h5v2.6h1.4V-3L4.8 0L1.8 3V1.4H.4V4h-5z" fill="#ececec"/></g><g transform="translate(311.5 278.0) scale(1.06)"><path d="M-4.4 -4.2h8.8v4.4H1.5v1.2H3.2L0 4.4L-3.2 1.4h1.7V.2h-2.9z" fill="#ececec"/></g><g transform="translate(324.8 278.0) scale(1.06)"><path d="M4.6 -4h-5v2.6h-1.4V-3L-4.8 0L-1.8 3V1.4H-.4V4h5z" fill="#ececec"/></g><g transform="translate(338.1 278.0) scale(1.06)"><path d="M-4.4 4.2h8.8V-.2H1.5v-1.2H3.2L0 -4.4L-3.2 -1.4h1.7V-.2h-2.9z" fill="#ececec"/></g><g transform="translate(191.8 291.2) scale(1.06)"><path d="M-2 -4.2h4v2.8h.8V-2.8L4.8 0L2.8 2.8V1.4H2v2.8h-4V1.4h-.8V2.8L-4.8 0L-2.8 -2.8v1.4h.8z" fill="#ececec"/></g><g transform="translate(205.1 291.2) scale(1.06)"><path d="M-1.8 -1.8V-2.6h-.8L0 -4.6L1.6 -2.6h-.8v.8h1.8V-2.6L4.6 0L2.6 1.6V.8H1.8V2.6h.8L0 4.6L-1.6 2.6h.8V1.8H-2.6v.8L-4.6 0L-2.6 -1.6v.8z" fill="#ececec"/><path d="M-1.9 -1.9h3.8v3.8h-3.8z" fill="#ececec"/></g><g transform="translate(218.4 291.2) scale(1.06)"><path d="M-2.8 3.2V-.2A2.8 2.8 0 0 1 2.8 -.2V1.6" fill="none" stroke="#ececec" stroke-width="1.7" stroke-linecap="butt" stroke-linejoin="round"/><path d="M.6 1.2H5L2.8 4z" fill="#ececec"/></g><g transform="translate(191.8 321.0) scale(1.06)"><path d="M-1 -4.2h2v3.2h3.6v2h-3.6v3.2h-2v-3.2h-3.6v-2h3.6z" fill="#ececec"/></g><g transform="translate(205.1 321.0) scale(1.06)"><path d="M-4.6 -1h9.2v2h-9.2z" fill="#ececec"/></g><g transform="translate(218.4 321.0) scale(1.06)"><g transform="rotate(45)"><path d="M-1 -4.6h2v3.6h3.6v2h-3.6v3.6h-2v-3.6h-3.6v-2h3.6z" fill="#ececec"/></g></g><g transform="translate(231.7 321.0) scale(1.06)"><path d="M-4.6 -.8h9.2v1.6h-9.2z" fill="#ececec"/><circle cy="-3" r="1.1" fill="#ececec"/><circle cy="3" r="1.1" fill="#ececec"/></g><g transform="translate(245.0 321.0) scale(1.06)"><path d="M-4.6 -3h9.2v2h-9.2zM-4.6 1h9.2v2h-9.2z" fill="#ececec"/></g><g transform="translate(258.3 321.0) scale(1.06)"><path d="M-3.600 -2h7.200v1.100h-7.200zM-3.600 .900h7.200v1.100h-7.200z" fill="#ececec"/><path d="M2.4 -4.2L-2.4 4.2" stroke="#ececec" stroke-width="1"/></g><g transform="translate(191.8 349.6) scale(1.06)"><path d="M-4.8 -3.7h9.6v7.4h-9.6z" fill="#ececec"/></g><g transform="translate(205.1 349.6) scale(1.06)"><rect x="-4.8" y="-3.7" width="9.6" height="7.4" rx="1.6" fill="#ececec"/></g><g transform="translate(218.4 349.6) scale(1.06)"><path d="M0 -2.8L4.8 0L0 2.8L-4.8 0z" fill="#ececec"/></g><g transform="translate(231.7 349.6) scale(1.06)"><path d="M-2 -3.7H4.8L2 3.7H-4.8z" fill="#ececec"/></g><g transform="translate(245.0 349.6) scale(1.06)"><path d="M-4.6 -3.7h9.2v7.4h-9.2z" fill="#ececec"/><path d="M-3.1 -3.7v7.4M3.1 -3.7v7.4" stroke="#555" stroke-width=".7"/></g><g transform="translate(258.3 349.6) scale(1.06)"><path d="M-4.4 -3.7h8.8v7.4h-8.4z" fill="#ececec"/><path d="M-2.8 -3.7v7.4M-4.4 -2.1h8.8" stroke="#555" stroke-width=".7"/></g><g transform="translate(271.6 349.6) scale(1.06)"><path d="M-4.6 -3.8h9.2V2.4C2 1.4 0 4.6 -4.6 3.2z" fill="#ececec"/></g><g transform="translate(284.9 349.6) scale(1.06)"><path d="M-2.8 -4h7.6v5.4h-1.4v1h-1.4v1.2C1 2.6 -1 5 -4.8 3.8V-1.6h1v-1.2h1z" fill="#ececec"/><path d="M-3.8 -1.6h6.8v4M-2.8 -2.8h7.2v4" fill="none" stroke="#555" stroke-width=".5"/></g><g transform="translate(298.2 349.6) scale(1.06)"><rect x="-4.8" y="-1.9" width="9.6" height="3.8" rx="1.9" fill="#ececec"/></g><g transform="translate(311.5 349.6) scale(1.06)"><path d="M-2.8 -2.9H2.8L4.8 0L2.8 2.9H-2.8L-4.8 0z" fill="#ececec"/></g><g transform="translate(324.8 349.6) scale(1.06)"><path d="M-4.6 -1.4L4.6 -3.6V3.6H-4.6z" fill="#ececec"/></g><g transform="translate(338.1 349.6) scale(1.06)"><path d="M-4.8 -3.8H4.8L2.8 3.8H-2.8z" fill="#ececec"/></g><g transform="translate(191.8 363.0) scale(1.06)"><circle r="2.7" fill="#ececec"/></g><g transform="translate(205.1 363.0) scale(1.06)"><path d="M-3.8 -3.6h7.6V1L0 4.2L-3.8 1z" fill="#ececec"/></g><g transform="translate(218.4 363.0) scale(1.06)"><path d="M-2.6 -3.7H4.6V3.7H-4.6V-1.7z" fill="#ececec"/></g><g transform="translate(231.7 363.0) scale(1.06)"><path d="M-4.6 -3C-2 -1.4 -1 -4.6 4.6 -3.2V3C2 1.4 1 4.6 -4.6 3.2z" fill="#ececec"/></g><g transform="translate(245.0 363.0) scale(1.06)"><circle r="4.1" fill="#ececec"/><path d="M-2.9 -2.9L2.9 2.9M2.9 -2.9L-2.9 2.9" stroke="#444" stroke-width=".7"/></g><g transform="translate(258.3 363.0) scale(1.06)"><circle r="4.1" fill="#ececec"/><path d="M0 -4.1V4.1M-4.1 0H4.1" stroke="#444" stroke-width=".7"/></g><g transform="translate(271.6 363.0) scale(1.06)"><path d="M-2.6 -4.2H2.6L0 0L2.6 4.2H-2.6L0 0z" fill="#ececec"/></g><g transform="translate(284.9 363.0) scale(1.06)"><path d="M0 -4.4L2.6 0L0 4.4L-2.6 0z" fill="#ececec"/><path d="M-2.6 0h5.2" stroke="#555" stroke-width=".6"/></g><g transform="translate(298.2 363.0) scale(1.06)"><path d="M0 -4.2L4.2 4H-4.2z" fill="#ececec"/></g><g transform="translate(311.5 363.0) scale(1.06)"><path d="M0 4.2L4.2 -4H-4.2z" fill="#ececec"/></g><g transform="translate(324.8 363.0) scale(1.06)"><path d="M-2.8 -3.6H4.6C3 -2 3 2 4.6 3.6H-2.8C-5.4 2 -5.4 -2 -2.8 -3.6z" fill="#ececec"/></g><g transform="translate(338.1 363.0) scale(1.06)"><path d="M-4.2 -3.8H.4A3.9 3.8 0 0 1 .4 3.8H-4.2z" fill="#ececec"/></g><g transform="translate(191.8 376.0) scale(1.06)"><circle r="4.400" fill="#ececec"/><path d="M0 3H4.800V4.400H0z" fill="#ececec"/></g><g transform="translate(205.1 376.0) scale(1.06)"><path d="M-4.4 -1.8c0-2 8.8-2 8.8 0v3.6c0 2-8.8 2-8.8 0z" fill="#ececec"/><path d="M-4.4 -1.6c0 1.8 8.8 1.8 8.8 0" fill="none" stroke="#555" stroke-width=".6"/></g><g transform="translate(218.4 376.0) scale(1.06)"><path d="M-2 -4.400c-2 0-2 8.800 0 8.800h4c2 0 2-8.800 0-8.800z" fill="#ececec"/><path d="M2.2 -4c-2 0-2 8 0 8" fill="none" stroke="#555" stroke-width=".6"/></g><g transform="translate(231.7 376.0) scale(1.06)"><path d="M-2.400 -4.300H2.400A4.300 4.300 0 0 1 2.400 4.300H-2.400L-4.800 0z" fill="#ececec"/></g><g transform="translate(191.8 405.2) scale(1.06)"><path d="M-.4 -4.6L.8 -2.2L3.4 -4L2.8 -1.4L4.8 -1L3.2 .6L4.6 2.6L2.4 2.2L2.2 4.4L.4 2.6L-1 4.6L-1.4 2.4L-3.8 3.4L-2.8 1.2L-4.8 .6L-3 -.6L-4.4 -2.6L-2 -2.2z" fill="#ececec"/></g><g transform="translate(205.1 405.2) scale(1.06)"><path d="M.6 -4.6L1 -2.4L3.8 -3.4L2.6 -1.2L4.8 -.4L3 .6L4 2.6L2 2L1.8 4.6L.2 2.6L-1.6 4.2L-1.6 2.2L-4.4 3L-2.8 1L-4.8 -.2L-2.8 -.8L-3.8 -3.2L-1.4 -2.2z" fill="#ececec"/></g><g transform="translate(218.4 405.2) scale(1.06)"><path d="M0.0 -4.9L0.9 -0.9L4.9 0.0L0.9 0.9L0.0 4.9L-0.9 0.9L-4.9 0.0L-0.9 -0.9z" fill="#ececec"/></g><g transform="translate(231.7 405.2) scale(1.06)"><path d="M0.0 -4.8L1.1 -1.5L4.6 -1.5L1.8 0.6L2.8 3.9L0.0 1.9L-2.8 3.9L-1.8 0.6L-4.6 -1.5L-1.1 -1.5z" fill="#ececec"/></g><g transform="translate(245.0 405.2) scale(1.06)"><path d="M0.0 -4.7L1.4 -2.3L4.1 -2.3L2.7 0.0L4.1 2.3L1.4 2.3L0.0 4.7L-1.3 2.3L-4.1 2.3L-2.7 0.0L-4.1 -2.4L-1.4 -2.3z" fill="#ececec"/></g><g transform="translate(258.3 405.2) scale(1.06)"><path d="M0.0 -4.7L1.3 -2.7L3.7 -2.9L2.9 -0.7L4.6 1.0L2.3 1.9L2.0 4.2L0.0 3.0L-2.0 4.2L-2.3 1.9L-4.6 1.0L-2.9 -0.7L-3.7 -2.9L-1.3 -2.7z" fill="#ececec"/></g><g transform="translate(271.6 405.2) scale(1.06)"><path d="M0.0 -4.6L1.3 -3.2L3.3 -3.3L3.2 -1.3L4.6 0.0L3.2 1.3L3.3 3.3L1.3 3.2L0.0 4.6L-1.3 3.2L-3.3 3.3L-3.2 1.3L-4.6 0.0L-3.2 -1.3L-3.3 -3.3L-1.3 -3.2z" fill="#ececec"/><g fill="none" stroke="#3a3a3a" stroke-width=".5" stroke-linejoin="round"><path transform="translate(-0.62 -1.35) scale(1.25 1.35)" d="M0 0H1V2H0zM0 1H1"/></g></g><g transform="translate(284.9 405.2) scale(1.06)"><path d="M0.0 -4.6L1.1 -3.5L2.7 -3.7L3.0 -2.2L4.4 -1.4L3.7 0.0L4.4 1.4L3.0 2.2L2.7 3.7L1.1 3.5L0.0 4.6L-1.1 3.5L-2.7 3.7L-3.0 2.2L-4.4 1.4L-3.7 0.0L-4.4 -1.4L-3.0 -2.2L-2.7 -3.7L-1.1 -3.5z" fill="#ececec"/><g fill="none" stroke="#3a3a3a" stroke-width=".5" stroke-linejoin="round"><path transform="translate(-1.52 -1.35) scale(1.25 1.35)" d="M.5 0V2"/><path transform="translate(0.28 -1.35) scale(1.25 1.35)" d="M0 0H1V2H0z"/></g></g><g transform="translate(298.2 405.2) scale(1.06)"><path d="M0.0 -4.7L1.0 -3.7L2.4 -4.1L2.7 -2.7L4.1 -2.3L3.7 -1.0L4.7 0.0L3.7 1.0L4.1 2.3L2.7 2.7L2.4 4.1L1.0 3.7L0.0 4.7L-1.0 3.7L-2.3 4.1L-2.7 2.7L-4.1 2.3L-3.7 1.0L-4.7 0.0L-3.7 -1.0L-4.1 -2.4L-2.7 -2.7L-2.4 -4.1L-1.0 -3.7z" fill="#ececec"/><g fill="none" stroke="#3a3a3a" stroke-width=".5" stroke-linejoin="round"><path transform="translate(-1.52 -1.35) scale(1.25 1.35)" d="M.5 0V2"/><path transform="translate(0.28 -1.35) scale(1.25 1.35)" d="M0 0H1V1H0V2H1"/></g></g><g transform="translate(311.5 405.2) scale(1.06)"><path d="M0.0 -4.7L0.8 -3.8L1.8 -4.3L2.2 -3.2L3.3 -3.3L3.2 -2.2L4.3 -1.8L3.8 -0.8L4.7 0.0L3.8 0.8L4.3 1.8L3.2 2.2L3.3 3.3L2.2 3.2L1.8 4.3L0.8 3.8L0.0 4.7L-0.8 3.8L-1.8 4.3L-2.2 3.2L-3.3 3.3L-3.2 2.2L-4.3 1.8L-3.8 0.8L-4.7 0.0L-3.8 -0.8L-4.3 -1.8L-3.2 -2.2L-3.3 -3.3L-2.2 -3.2L-1.8 -4.3L-0.8 -3.8z" fill="#ececec"/><g fill="none" stroke="#3a3a3a" stroke-width=".5" stroke-linejoin="round"><path transform="translate(-1.52 -1.35) scale(1.25 1.35)" d="M.5 0V2"/><path transform="translate(0.28 -1.35) scale(1.25 1.35)" d="M1 0H0V2H1V1H0"/></g></g><g transform="translate(324.8 405.2) scale(1.06)"><path d="M0.0 -4.6L0.5 -3.9L1.2 -4.4L1.5 -3.6L2.3 -4.0L2.4 -3.1L3.3 -3.3L3.1 -2.4L4.0 -2.3L3.6 -1.5L4.4 -1.2L3.9 -0.5L4.6 0.0L3.9 0.5L4.4 1.2L3.6 1.5L4.0 2.3L3.1 2.4L3.3 3.3L2.4 3.1L2.3 4.0L1.5 3.6L1.2 4.4L0.5 3.9L0.0 4.6L-0.5 3.9L-1.2 4.4L-1.5 3.6L-2.3 4.0L-2.4 3.1L-3.3 3.3L-3.1 2.4L-4.0 2.3L-3.6 1.5L-4.4 1.2L-3.9 0.5L-4.6 0.0L-3.9 -0.5L-4.4 -1.2L-3.6 -1.5L-4.0 -2.3L-3.1 -2.4L-3.3 -3.3L-2.4 -3.1L-2.3 -4.0L-1.5 -3.6L-1.2 -4.4L-0.5 -3.9z" fill="#ececec"/><g fill="none" stroke="#3a3a3a" stroke-width=".5" stroke-linejoin="round"><path transform="translate(-1.52 -1.35) scale(1.25 1.35)" d="M0 0H1V1H0V2H1"/><path transform="translate(0.28 -1.35) scale(1.25 1.35)" d="M0 0V1H1M1 0V2"/></g></g><g transform="translate(338.1 405.2) scale(1.06)"><path d="M0.0 -4.6L0.4 -4.0L0.9 -4.5L1.2 -3.8L1.8 -4.2L1.9 -3.5L2.6 -3.8L2.5 -3.1L3.3 -3.3L3.1 -2.5L3.8 -2.6L3.5 -1.9L4.2 -1.8L3.8 -1.2L4.5 -0.9L4.0 -0.4L4.6 0.0L4.0 0.4L4.5 0.9L3.8 1.2L4.2 1.8L3.5 1.9L3.8 2.6L3.1 2.5L3.3 3.3L2.5 3.1L2.6 3.8L1.9 3.5L1.8 4.2L1.2 3.8L0.9 4.5L0.4 4.0L0.0 4.6L-0.4 4.0L-0.9 4.5L-1.2 3.8L-1.8 4.2L-1.9 3.5L-2.6 3.8L-2.5 3.1L-3.3 3.3L-3.1 2.5L-3.8 2.6L-3.5 1.9L-4.2 1.8L-3.8 1.2L-4.5 0.9L-4.0 0.4L-4.6 0.0L-4.0 -0.4L-4.5 -0.9L-3.8 -1.2L-4.2 -1.8L-3.5 -1.9L-3.8 -2.6L-3.1 -2.5L-3.3 -3.3L-2.5 -3.1L-2.6 -3.8L-1.9 -3.5L-1.8 -4.2L-1.2 -3.8L-0.9 -4.5L-0.4 -4.0z" fill="#ececec"/><g fill="none" stroke="#3a3a3a" stroke-width=".5" stroke-linejoin="round"><path transform="translate(-1.52 -1.35) scale(1.25 1.35)" d="M0 0H1V2H0M0 1H1"/><path transform="translate(0.28 -1.35) scale(1.25 1.35)" d="M0 0H1V1H0V2H1"/></g></g><g transform="translate(191.8 418.0) scale(1.06)"><path d="M-4.8 -.4H-2.4V-3.4H2.4V-.4H4.8L3.8 1.6L4.8 3.6H1.2V1.2H-1.2V3.6H-4.8L-3.8 1.6z" fill="#ececec"/><path d="M-2.400 -.400v3.600M2.400 -.400v3.600M-2.400 -.400h4.800" stroke="#3a3a3a" stroke-width=".6" fill="none"/></g><g transform="translate(205.1 418.0) scale(1.06)"><path d="M-4.8 .4H-2.4V3.4H2.4V.4H4.8L3.8 -1.6L4.8 -3.6H1.2V-1.2H-1.2V-3.6H-4.8L-3.8 -1.6z" fill="#ececec"/><path d="M-2.400 .400v-3.600M2.400 .400v-3.600M-2.400 .400h4.800" stroke="#3a3a3a" stroke-width=".6" fill="none"/></g><g transform="translate(218.4 418.0) scale(1.06)"><path d="M-4.8 -.4H-2.4V-3.4H2.4V-.4H4.8L3.8 1.6L4.8 3.6H1.2V1.2H-1.2V3.6H-4.8L-3.8 1.6z" fill="#ececec"/><path d="M-2.400 -.400v3.600M2.400 -.400v3.600M-2.400 -.400h4.800" stroke="#3a3a3a" stroke-width=".6" fill="none"/></g><g transform="translate(231.7 418.0) scale(1.06)"><path d="M-4.8 .4H-2.4V3.4H2.4V.4H4.8L3.8 -1.6L4.8 -3.6H1.2V-1.2H-1.2V-3.6H-4.8L-3.8 -1.6z" fill="#ececec"/><path d="M-2.400 .400v-3.600M2.400 .400v-3.600M-2.400 .400h4.800" stroke="#3a3a3a" stroke-width=".6" fill="none"/></g><g transform="translate(245.0 418.0) scale(1.06)"><path d="M-3.2 -4.8H4.4V-3.4H3.2V4.8H-4.4V3.4H-3.2z" fill="#ececec"/><path d="M-2 -3.4v6.800M-3.2 3.400h5" stroke="#666" stroke-width=".5" fill="none"/></g><g transform="translate(258.3 418.0) scale(1.06)"><path d="M-4.800 -3.800H4.800V2.600H-3.400V4.200H-4.800z" fill="#ececec"/><path d="M-3.400 -2.400v5" stroke="#666" stroke-width=".5"/></g><g transform="translate(271.6 418.0) scale(1.06)"><path d="M-4.6 -2.8C-2 -4.6 1 -1.2 4.6 -3V2.8C1 4.6 -2 1.2 -4.6 3z" fill="#ececec"/></g><g transform="translate(284.9 418.0) scale(1.06)"><path d="M-4.6 -3C-3 -4.4 -1.4 -1.8 0 -3C1.4 -4.4 3 -1.8 4.6 -3V3C3 1.8 1.4 4.4 0 3C-1.4 1.8 -3 4.4 -4.6 3z" fill="#ececec"/></g>
  <!-- selection handles -->
  <path d="M565.9 172.4V189.4" stroke="#8c8c8c" stroke-width="1" fill="none"/>
  <g fill="none" stroke-linecap="butt" transform="translate(565.7 166.6)">
   <path d="M4.4 -1.6A4.7 4.7 0 1 0 2.6 3.9" stroke="#858585" stroke-width="3"/>
   <path d="M4.4 -1.6A4.7 4.7 0 1 0 2.6 3.9" stroke="#fff" stroke-width="1.3"/>
   <path d="M2.2 -.8H9.6L6 3.6z" fill="#fff" stroke="#858585" stroke-width=".85" stroke-linejoin="round"/>
   <path d="M3.6 -1.5L5.3 -1.5" stroke="#fff" stroke-width="1.3"/>
  </g>
  <g fill="#fff" stroke="#7d7d7d" stroke-width=".9">
   <circle cx="495.6" cy="189.6" r="3.1"/><circle cx="495.6" cy="259.2" r="3.1"/><circle cx="495.6" cy="329.0" r="3.1"/><circle cx="566.1" cy="189.6" r="3.1"/><circle cx="566.1" cy="329.0" r="3.1"/><circle cx="636.6" cy="189.6" r="3.1"/><circle cx="636.6" cy="259.2" r="3.1"/><circle cx="636.6" cy="329.0" r="3.1"/>
  </g>
 </svg>
 <span class="t" style="left:7.6px;top:8.4px;width:17.1px;font-size:8.1px">开始</span><span class="t" style="left:42.0px;top:8.5px;width:16.6px;font-size:7.9px">插入</span><span class="t" style="left:75.8px;top:8.5px;width:16.8px;font-size:8.0px">设计</span><span class="t" style="left:110.0px;top:8.4px;width:17.0px;font-size:8.1px">切换</span><span class="t" style="left:143.8px;top:8.4px;width:17.0px;font-size:8.1px">动画</span><span class="t" style="left:178.3px;top:8.6px;width:40.2px;font-size:7.7px">幻灯片放映</span><span class="t" style="left:235.7px;top:8.4px;width:17.0px;font-size:8.1px">审阅</span><span class="t" style="left:269.0px;top:8.4px;width:17.0px;font-size:8.1px">视图</span><span class="t" style="left:303.0px;top:8.4px;width:17.0px;font-size:8.1px">帮助</span><span class="t" style="left:341.6px;top:8.3px;width:17.4px;font-size:8.3px">格式</span><span class="t" style="left:398.0px;top:8.5px;width:49.5px;font-size:7.9px">操作说明搜索</span><span class="t" style="left:14.5px;top:50.2px;width:17.5px;font-size:8.3px">表格</span><span class="t" style="left:53.0px;top:50.3px;width:17.0px;font-size:8.1px">图片</span><span class="t" style="left:76.0px;top:50.5px;width:32.5px;font-size:7.8px">联机图片</span><span class="t" style="left:112.0px;top:50.5px;width:32.2px;font-size:7.7px">屏幕截图</span><span class="t" style="left:151.2px;top:50.3px;width:17.1px;font-size:8.1px">相册</span><span class="t" style="left:190.4px;top:50.3px;width:17.1px;font-size:8.1px">形状</span><span class="t" style="left:255.0px;top:50.3px;width:17.0px;font-size:8.1px">图表</span><span class="t" style="left:302.0px;top:33.7px;width:41.0px;font-size:7.9px">获取加载项</span><span class="t" style="left:302.0px;top:53.9px;width:41.0px;font-size:7.9px">我的加载项</span><span class="t" style="left:376.0px;top:49.8px;width:9.6px;font-size:9.1px">链</span><span class="t" style="left:376.0px;top:59.7px;width:9.6px;font-size:9.1px">接</span><span class="t" style="left:400.0px;top:50.3px;width:17.0px;font-size:8.1px">动作</span><span class="t" style="left:438.5px;top:50.2px;width:17.5px;font-size:8.3px">批注</span><span class="t" style="left:473.0px;top:50.4px;width:25.0px;font-size:8.0px">文本框</span><span class="t" style="left:500.6px;top:50.5px;width:40.4px;font-size:7.8px">页眉和页脚</span><span class="t" style="left:544.5px;top:50.4px;width:25.0px;font-size:8.0px">艺术字</span><span class="t" style="left:571.8px;top:50.5px;width:40.6px;font-size:7.8px">日期和时间</span><span class="t" style="left:616.0px;top:50.4px;width:25.0px;font-size:8.0px">幻灯片</span><span class="t" style="left:620.4px;top:60.3px;width:16.6px;font-size:7.9px">编号</span><span class="t" style="left:647.0px;top:50.3px;width:17.0px;font-size:8.1px">对象</span><span class="t" style="left:13.7px;top:74.6px;width:17.3px;font-size:8.2px">表格</span><span class="t" style="left:101.4px;top:74.6px;width:17.1px;font-size:8.1px">图像</span><span class="t" style="left:385.0px;top:74.6px;width:17.0px;font-size:8.1px">链接</span><span class="t" style="left:438.0px;top:74.4px;width:18.0px;font-size:8.6px">批注</span><span class="t" style="left:561.8px;top:74.6px;width:17.2px;font-size:8.2px">文本</span><span class="t" style="left:191.7px;top:76.3px;width:56.2px;font-size:7.7px">最近使用的形状</span><span class="t" style="left:191.7px;top:118.1px;width:16.8px;font-size:8.0px">线条</span><span class="t" style="left:191.7px;top:146.4px;width:16.8px;font-size:8.0px">矩形</span><span class="t" style="left:191.5px;top:176.3px;width:32.5px;font-size:7.8px">基本形状</span><span class="t" style="left:191.5px;top:246.4px;width:32.5px;font-size:7.8px">箭头总汇</span><span class="t" style="left:191.5px;top:301.3px;width:32.5px;font-size:7.8px">公式形状</span><span class="t" style="left:191.5px;top:331.0px;width:24.4px;font-size:7.8px">流程图</span><span class="t" style="left:191.5px;top:386.1px;width:32.9px;font-size:7.9px">星与旗帜</span><span class="t" style="left:191.5px;top:428.5px;width:16.8px;font-size:8.0px">标注</span><span class="t" style="left:196.6px;top:186.8px;width:16.6px;font-size:7.9px">矩形</span>
 <div class="tip"></div>
 <svg id="ov2" width="650" height="438" viewBox="0 0 650 438">
  <text x="196.3" y="193.95" font-size="8.12" fill="#5c5c5c">矩形</text>
  
<g fill="#f0231b">
 <path d="M69 30.6L100 31.9L154.8 33.8L157 30.2L170.2 38.6L152.3 45L153 40.2L100 36L69 31.7z"/>
 <path d="M188 114L188.7 114L195 143.2L198.8 142.7L191.6 157.9L184 144.3L188.9 143.6z"/>
 <path d="M214.5 173.4L510 239.7L512.3 237.2L523.2 246.5L509.2 251.7L509 247.2L214.5 174.8z"/>
</g>
<g fill="none" stroke="#f0231b" stroke-width="2.4">
 <rect x="33.6" y="5.3" width="31.7" height="17.9" rx="2.6" stroke-width="3"/>
 <rect x="173.9" y="22.9" width="40.9" height="50.5" rx="2.4" stroke-width="2.8"/>
 <rect x="183.9" y="159.2" width="17.1" height="16.4" rx="2.6" stroke-width="3"/>
</g>
 </svg>
</div>
</body>
</html>
